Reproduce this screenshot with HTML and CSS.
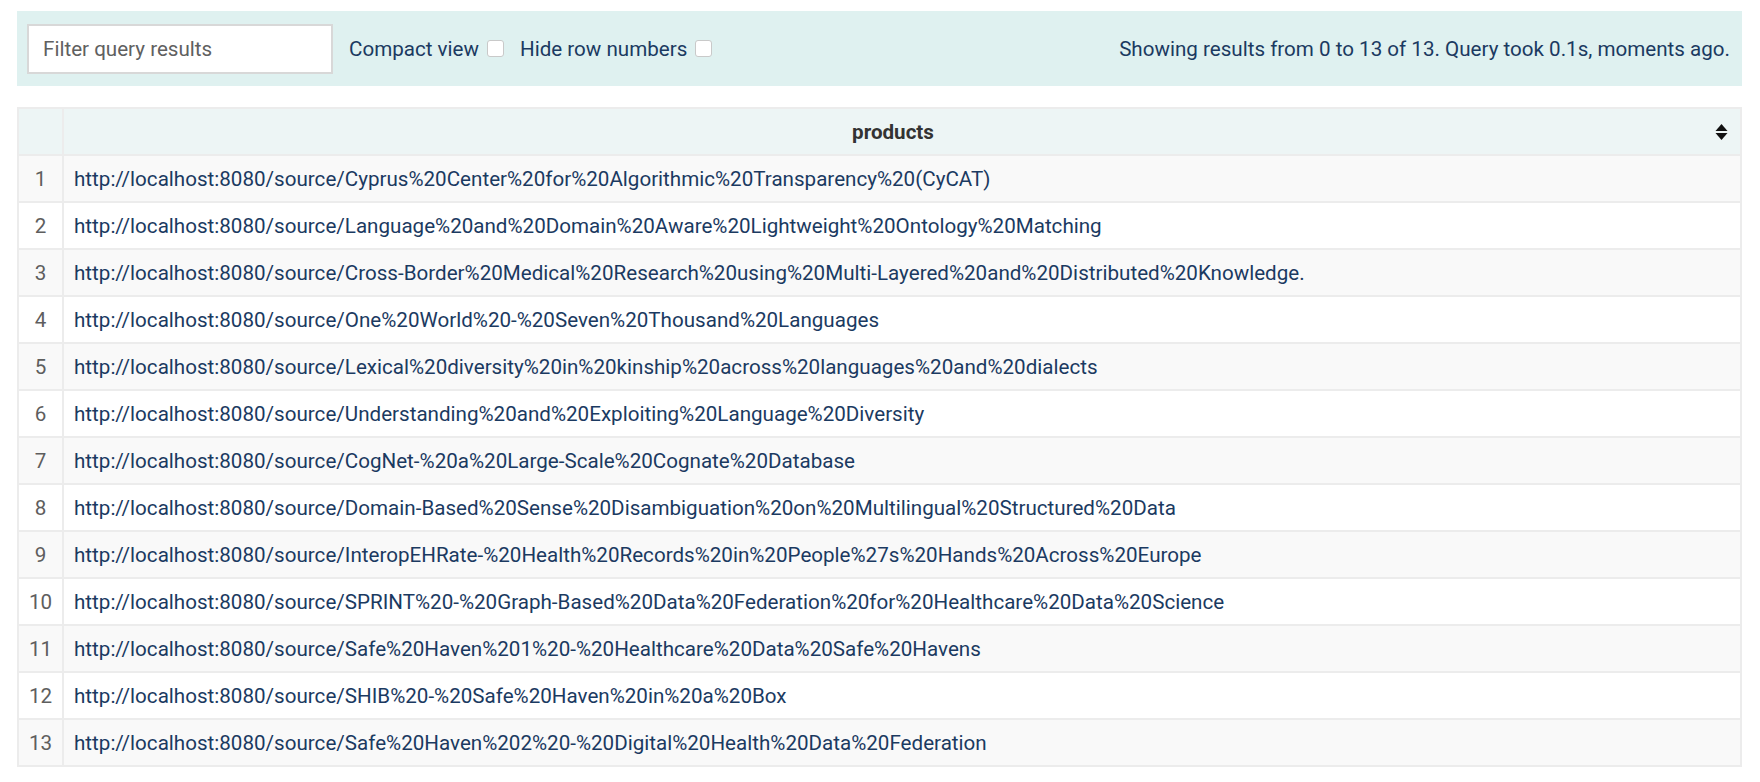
FILE: index.html
```html
<!DOCTYPE html>
<html>
<head>
<meta charset="utf-8">
<link rel="stylesheet" href="styles.css">
</head>
<body>
<div class="page">
  <div class="controls">
    <input class="filter" type="text" placeholder="Filter query results">
    <label class="opt">Compact view <span class="box"></span></label>
    <label class="opt">Hide row numbers <span class="box"></span></label>
    <div class="status">Showing results from 0 to 13 of 13. Query took 0.1s, moments ago.</div>
  </div>
  <table class="results">
    <thead>
      <tr>
        <th class="num"></th>
        <th class="col">products<span class="sort"><svg width="13" height="18" viewBox="0 0 13 18"><path d="M6.5 1 L12.5 8 L0.5 8 Z" fill="#111"/><path d="M0.5 10 L12.5 10 L6.5 17 Z" fill="#111"/></svg></span></th>
      </tr>
    </thead>
    <tbody>
      <tr><td class="num">1</td><td class="url">http://localhost:8080/source/Cyprus%20Center%20for%20Algorithmic%20Transparency%20(CyCAT)</td></tr>
      <tr><td class="num">2</td><td class="url">http://localhost:8080/source/Language%20and%20Domain%20Aware%20Lightweight%20Ontology%20Matching</td></tr>
      <tr><td class="num">3</td><td class="url">http://localhost:8080/source/Cross-Border%20Medical%20Research%20using%20Multi-Layered%20and%20Distributed%20Knowledge.</td></tr>
      <tr><td class="num">4</td><td class="url">http://localhost:8080/source/One%20World%20-%20Seven%20Thousand%20Languages</td></tr>
      <tr><td class="num">5</td><td class="url">http://localhost:8080/source/Lexical%20diversity%20in%20kinship%20across%20languages%20and%20dialects</td></tr>
      <tr><td class="num">6</td><td class="url">http://localhost:8080/source/Understanding%20and%20Exploiting%20Language%20Diversity</td></tr>
      <tr><td class="num">7</td><td class="url">http://localhost:8080/source/CogNet-%20a%20Large-Scale%20Cognate%20Database</td></tr>
      <tr><td class="num">8</td><td class="url">http://localhost:8080/source/Domain-Based%20Sense%20Disambiguation%20on%20Multilingual%20Structured%20Data</td></tr>
      <tr><td class="num">9</td><td class="url">http://localhost:8080/source/InteropEHRate-%20Health%20Records%20in%20People%27s%20Hands%20Across%20Europe</td></tr>
      <tr><td class="num">10</td><td class="url">http://localhost:8080/source/SPRINT%20-%20Graph-Based%20Data%20Federation%20for%20Healthcare%20Data%20Science</td></tr>
      <tr><td class="num">11</td><td class="url">http://localhost:8080/source/Safe%20Haven%201%20-%20Healthcare%20Data%20Safe%20Havens</td></tr>
      <tr><td class="num">12</td><td class="url">http://localhost:8080/source/SHIB%20-%20Safe%20Haven%20in%20a%20Box</td></tr>
      <tr><td class="num">13</td><td class="url">http://localhost:8080/source/Safe%20Haven%202%20-%20Digital%20Health%20Data%20Federation</td></tr>
    </tbody>
  </table>
</div>
</body>
</html>
```

FILE: styles.css
```css
* { box-sizing: border-box; }
html, body { margin: 0; padding: 0; background: #fff; }
body { font-family: Roboto, "Liberation Sans", sans-serif; color: #1b3a61; }
.page { padding: 11px 18px 0 17px; }
.controls {
  display: flex;
  align-items: center;
  height: 75px;
  padding: 0 12px 0 10px;
  background: #dff1f0;
}
.filter {
  width: 306px;
  height: 50px;
  border: 2px solid #d8d8d8;
  background: #fff;
  padding: 0 14px;
  font-family: Roboto, "Liberation Sans", sans-serif;
  font-size: 20.6px;
  color: #333;
  outline: none;
}
.filter::placeholder { color: #606060; }
.opt {
  display: flex;
  align-items: center;
  font-size: 20.6px;
  color: #1b3a61;
  margin-left: 16px;
}
.opt + .opt { margin-left: 16px; }
.box {
  display: inline-block;
  width: 17px;
  height: 17px;
  margin-left: 8px;
  border: 1px solid #c9c9c9;
  border-radius: 3px;
  background: #fff;
}
.status {
  margin-left: auto;
  font-size: 20.6px;
  color: #1b3a61;
}
.results {
  width: 100%;
  margin-top: 21px;
  border-collapse: collapse;
  border: 2px solid #ececec;
}
.results th, .results td {
  border: 2px solid #ececec;
  font-size: 20.6px;
}
.results thead th {
  background: #edf5f5;
  height: 47px;
  color: #333;
  font-weight: 700;
  position: relative;
  padding: 0 28px 0 10px;
  text-align: center;
}
.results th.num { width: 45px; padding: 0; }
.sort {
  position: absolute;
  right: 12px;
  top: 50%;
  transform: translateY(-50%);
  line-height: 0;
}
.results tbody td { height: 47px; padding: 0 10px; }
.results tbody tr:nth-child(odd) td { background: #f9f9f9; }
.results tbody tr:nth-child(even) td { background: #fff; }
.results td.num { color: #5e5e5e; text-align: center; padding: 0; }
.results td.url { color: #1b3a61; padding-left: 10px; }
```
